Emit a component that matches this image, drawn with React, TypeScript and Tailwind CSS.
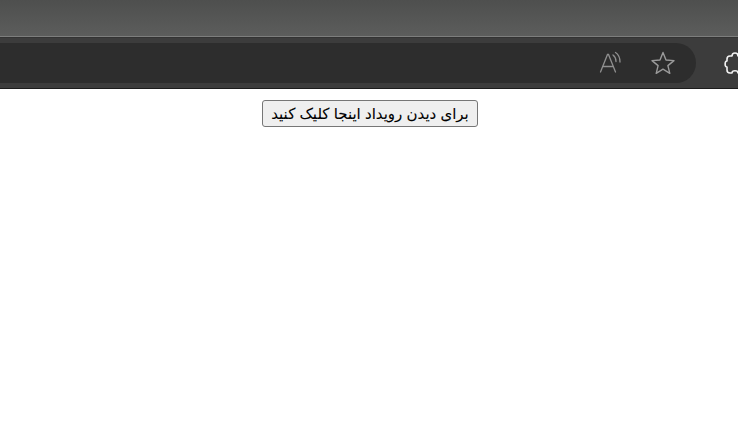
import React from "react";

const ReadAloudIcon = () => (
  <svg width="24" height="24" viewBox="0 0 24 24" fill="none" stroke="#8f8f8f" strokeWidth="1.3" strokeLinecap="round">
    <path d="M2.5 21 L9.5 3.5 L10.5 3.5 L17.5 21" />
    <path d="M5 15.5 H15" />
    <path d="M15 4 C17 5.5 18 8 18 10.5" />
    <path d="M17.5 1.5 C20.5 3.5 22 7 22 11" />
  </svg>
);

const StarIcon = () => (
  <svg width="24" height="24" viewBox="0 0 24 24" fill="none" stroke="#9a9a9a" strokeWidth="1.4" strokeLinejoin="round">
    <path d="M12 1.5 L15 9 L23 9.6 L16.9 14.6 L18.8 22.3 L12 18.2 L5.2 22.3 L7.1 14.6 L1 9.6 L9 9 Z" />
  </svg>
);

const ExtensionIcon = () => (
  <svg width="24" height="24" viewBox="0 0 24 24" fill="none" stroke="#f2f2f2" strokeWidth="1.6" strokeLinejoin="round" className="shrink-0">
    <path d="M8 5 C8 1 14 1 14 5 H18 C20 5 21 6 21 8 V10 C25 10 25 16 21 16 V19 C21 21 20 22 18 22 H14 C14 19 8 19 8 22 H6 C4 22 3 21 3 19 V16 C0.5 16 0.5 10 3 10 V8 C3 6 4 5 6 5 Z" />
  </svg>
);

export default function App() {
  return (
    <div className="h-[426px] w-[738px] overflow-hidden bg-white font-['Liberation_Sans','DejaVu_Sans',sans-serif]">
      <div className="h-9 bg-gradient-to-b from-[#4e4f4e] to-[#5c5d5c]" />
      <div className="h-px bg-[#7d7e7d]" />
      <div className="flex h-[51px] items-center border-t border-[#333] bg-[#3c3c3c] pb-[1px]">
        <div className="flex h-10 w-[696px] shrink-0 items-center justify-end rounded-r-[20px] bg-[#2d2d2d] pr-[21px]">
          <div className="mr-[29px]"><ReadAloudIcon /></div>
          <StarIcon />
        </div>
        <div className="ml-[28px]"><ExtensionIcon /></div>
      </div>
      <div className="h-px bg-[#1c1c1c]" />
      <div className="flex justify-center pl-[2px] pt-[11px]">
        <button dir="rtl" className="h-[27px] w-[216px] rounded-[3px] border border-[#767676] bg-[#efefef] text-[15px] leading-none whitespace-nowrap text-black [-webkit-text-stroke:0.08px_black]">
          برای دیدن رویداد اینجا کلیک کنید
        </button>
      </div>
    </div>
  );
}
